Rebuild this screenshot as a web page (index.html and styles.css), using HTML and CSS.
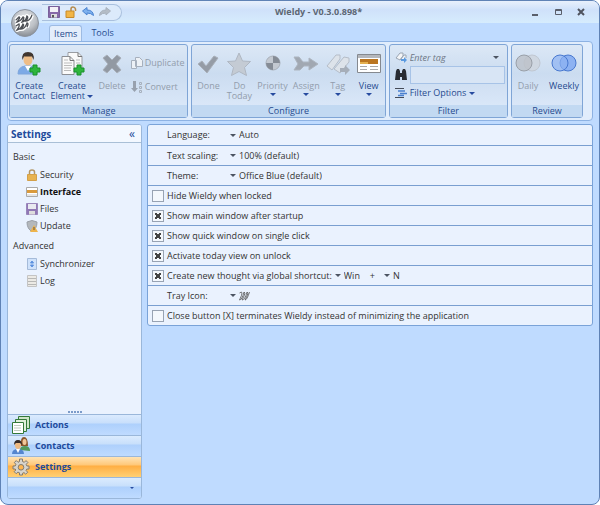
FILE: index.html
```
<!DOCTYPE html>
<html lang="en">
<head>
    <meta charset="UTF-8">
    <meta name="viewport" content="width=device-width, initial-scale=1.0">
    <title>Wieldy</title>
    <link rel="stylesheet" href="styles.css">
</head>
<body>
    <div class="window">
        <header class="titlebar">
            <button class="orb" aria-label="Application menu">
                <svg width="28" height="28" viewBox="0 0 28 28">
                    <defs>
                        <radialGradient id="orb" cx="50%" cy="30%" r="70%">
                            <stop offset="0" stop-color="#e4e6e9"/>
                            <stop offset="0.6" stop-color="#bcc0c5"/>
                            <stop offset="1" stop-color="#878c93"/>
                        </radialGradient>
                    </defs>
                    <circle cx="14" cy="14" r="13.5" fill="url(#orb)" stroke="#8a929e"/>
                    <path d="M5 11l3-3q2 0-2 5 4-1 6-5 2 0-1 5 4-1 5-6 2 1-1 5 4 0 6-6M5 17l3-2q1 2-2 6 4-1 6-6 2 1-2 5 4 0 6-6 2 0 0 4" fill="none" stroke="#fff" stroke-width="4" stroke-linejoin="round"/>
                    <path d="M5 11l3-3q2 0-2 5 4-1 6-5 2 0-1 5 4-1 5-6 2 1-1 5 4 0 6-6M5 17l3-2q1 2-2 6 4-1 6-6 2 1-2 5 4 0 6-6 2 0 0 4" fill="none" stroke="#4d5055" stroke-width="1.3"/>
                </svg>
            </button>
            <div class="quick">
                <button aria-label="Save">
                    <svg width="12" height="12" viewBox="0 0 12 12"><path d="M.5.5h11v11H.5z" fill="#8768a8" stroke="#7a609b"/><path d="M2 1h8v5H2z" fill="#f3f1f8"/><path d="M3 8h6v3.500H3z" fill="#ddd"/><path d="M4 9h2v2.500H4z" fill="#555"/></svg>
                </button>
                <button aria-label="Lock">
                    <svg width="12" height="12" viewBox="0 0 12 12"><path d="M6 6V3q0-2 2-2t2.500 2v2" fill="none" stroke="#b58a4c" stroke-width="1.500"/><path d="M1 5h8v6.500H1z" fill="#f2b545" stroke="#c68a2b"/></svg>
                </button>
                <button aria-label="Undo">
                    <svg width="12" height="12" viewBox="0 0 12 12"><path d="M.5 5L5 1.500V4q6 0 6.500 5.500Q9 7 5 7v2z" fill="#7db0ee" stroke="#4b83d0"/></svg>
                </button>
                <button aria-label="Redo" disabled>
                    <svg width="12" height="12" viewBox="0 0 12 12"><path d="M11.500 5L7 1.500V4Q1 4 .5 9.500 3 7 7 7v2z" fill="#b4bcc6" stroke="#a8b1bd"/></svg>
                </button>
            </div>
            <h1 class="title">Wieldy - V0.3.0.898*</h1>
            <div class="controls">
                <button aria-label="Minimize"><svg width="8" height="8" viewBox="0 0 8 8"><path d="M1 6h6v2H1z" fill="#5a5f6b"/></svg></button>
                <button aria-label="Maximize"><svg width="8" height="8" viewBox="0 0 8 8"><path d="M1.500 1.500h6v5h-6zM1.500 2.500h6" fill="none" stroke="#5a5f6b"/></svg></button>
                <button aria-label="Close"><svg width="8" height="8" viewBox="0 0 8 8"><path d="M1 1l6 6M7 1L1 7" stroke="#4f535e" stroke-width="2"/></svg></button>
            </div>
        </header>

        <nav class="tabs">
            <button class="tab active">Items</button>
            <button class="tab">Tools</button>
        </nav>

        <div class="ribbon">
            <section class="group manage">
                <div class="tools">
                    <button class="tool">
                        <svg width="26" height="26" viewBox="0 0 26 26"><path d="M2 23q0-7 7-8h5q6 1 7 8z" fill="#7daae6" stroke="#7fa6dc"/><path d="M9 15l3 5 3-5z" fill="#fff"/><ellipse cx="12" cy="8.500" rx="4.500" ry="6" fill="#eebd87"/><path d="M6.500 9Q5 1 12 1t5.500 8L16 5.500H8z" fill="#40362f"/><path d="M17 14h4v3h3v4h-3v3h-4v-3h-3v-4h3z" fill="#2eb53c" stroke="#18902a"/></svg>
                        <span>Create<br>Contact</span>
                    </button>
                    <button class="tool">
                        <svg width="26" height="26" viewBox="0 0 26 26"><path d="M9 1.500h10l4 4v13H9z" fill="#fafafa" stroke="#9a9da2"/><path d="M3 5.500h8l4 4v14H3z" fill="#fafafa" stroke="#8c8f94"/><path d="M5 9h4M5 12h8M5 14.500h8M5 17h7M5 19.500h7M17 9h4M17 12h4" stroke="#bbb"/><path d="M11 5.500v4h4M19 1.500v4h4" fill="none" stroke="#777"/><path d="M18 14h4v3h3v4h-3v3h-4v-3h-3v-4h3z" fill="#2eb53c" stroke="#18902a"/></svg>
                        <span>Create<br>Element <i class="arrow"></i></span>
                    </button>
                    <button class="tool" disabled>
                        <svg width="26" height="26" viewBox="0 0 26 26"><path d="M4 7l4-3 5 5 5-5 4 3-5 6 5 6-4 3-5-5-5 5-4-3 5-6z" fill="#9299a3" stroke="#a9b0ba"/></svg>
                        <span>Delete</span>
                    </button>
                    <div class="stack">
                        <button class="small" disabled>
                            <svg width="12" height="12" viewBox="0 0 12 12"><path d="M4.500.5h4l3 3v6h-7zM.5 3.500h5v8h-5z" fill="#edf1f6" stroke="#a7b0bd"/></svg>Duplicate
                        </button>
                        <button class="small" disabled>
                            <svg width="12" height="12" viewBox="0 0 12 12"><path d="M2 0h3v7h2l-3.500 4L0 7h2z" fill="#98a1ae"/><path d="M8.500 1.500h2v2h-2zM8.500 5.500h2v2h-2zM8.500 9.500h2v2h-2z" fill="none" stroke="#a7b0bd"/></svg>Convert
                        </button>
                    </div>
                </div>
                <h2 class="caption">Manage</h2>
            </section>
            <section class="group configure">
                <div class="tools">
                    <button class="tool" disabled>
                        <svg width="26" height="26" viewBox="0 0 26 26"><path d="M3 13l4-3 4 5 8-10 4 2-11 15z" fill="#959ca6" stroke="#a9b0ba"/></svg>
                        <span>Done</span>
                    </button>
                    <button class="tool" disabled>
                        <svg width="26" height="26" viewBox="0 0 26 26"><path d="M13 2l3.500 8 8 .5-6 6 2 8-7.500-4-7.500 4 2-8-6-6 8-.5z" fill="#c4cbd4" stroke="#afb7c2"/></svg>
                        <span>Do<br>Today</span>
                    </button>
                    <button class="tool" disabled>
                        <svg width="26" height="26" viewBox="0 0 26 26"><circle cx="13" cy="12" r="7" fill="#c3c9d1" stroke="#a9b0ba"/><path d="M13 12V5a7 7 0 0 1 7 7zM13 12v7a7 7 0 0 1-7-7z" fill="#858c96"/></svg>
                        <span>Priority<i class="arrow"></i></span>
                    </button>
                    <button class="tool" disabled>
                        <svg width="26" height="26" viewBox="0 0 26 26"><path d="M1 6h5l4 5h6V7l9 6-9 6v-4h-5l-4 4H1l4-6z" fill="#a1a8b2" stroke="#adb5c0"/></svg>
                        <span>Assign<i class="arrow"></i></span>
                    </button>
                    <button class="tool" disabled>
                        <svg width="26" height="26" viewBox="0 0 26 26"><path d="M2 15L11 4h4v4L7 19zM9 18L19 6l5 1v4l-9 11z" fill="#dde3ea" stroke="#b5bdc8"/><path d="M15 17h5v-3l5 5-5 5v-3h-5z" fill="#a6aeb9"/></svg>
                        <span>Tag<i class="arrow"></i></span>
                    </button>
                    <button class="tool">
                        <svg width="26" height="26" viewBox="0 0 26 26"><path d="M1.500 3.500h23v18h-23z" fill="#fff" stroke="#85898f"/><path d="M2 4h22v3H2z" fill="#b4b7bc"/><path d="M4 8h18v5H4z" fill="#bb7621"/><path d="M4 11h8v2H4z" fill="#e5b04e"/><path d="M4 15.500h7M4 18.500h7M14 15.500h8M14 18.500h8" stroke="#aaa"/></svg>
                        <span>View<i class="arrow"></i></span>
                    </button>
                </div>
                <h2 class="caption">Configure</h2>
            </section>
            <section class="group filter">
                <div class="fields">
                    <div class="field">
                        <svg width="12" height="12" viewBox="0 0 12 12"><path d="M1 7l4-5 3 0v3L5 9zM5 9l4-5h2v3" fill="#f3f5f8" stroke="#9aa5b3"/><path d="M6 8h3V6l3 3-3 3v-2H6z" fill="#5a9ae0"/></svg>
                        <input class="tag" type="text" placeholder="Enter tag" aria-label="Enter tag">
                        <i class="arrow dark"></i>
                    </div>
                    <div class="field">
                        <svg width="12" height="12" viewBox="0 0 12 12"><path d="M1 2l1-2h2l1 2v2h2V2l1-2h2l1 2 1 9H7V8H5v3H0z" fill="#292c32"/></svg>
                        <input class="search" type="text" aria-label="Search">
                    </div>
                    <button class="field options">
                        <svg width="12" height="12" viewBox="0 0 12 12"><path d="M0 1.500h9M0 10.500h9" stroke="#444b57"/><path d="M3 4h7M5 6.500h7M3 8.500h6" stroke="#4a80cf" stroke-width="1.500"/></svg>Filter Options <i class="arrow"></i>
                    </button>
                </div>
                <h2 class="caption">Filter</h2>
            </section>
            <section class="group review">
                <div class="tools">
                    <button class="tool" disabled>
                        <svg width="26" height="26" viewBox="0 0 26 26"><circle cx="17" cy="12" r="8" fill="#cfd7e1" stroke="#c0c7d1"/><circle cx="9" cy="12" r="8" fill="#bcc1c8" fill-opacity=".8" stroke="#999fa8"/></svg>
                        <span>Daily</span>
                    </button>
                    <button class="tool">
                        <svg width="26" height="26" viewBox="0 0 26 26"><circle cx="17" cy="12" r="8" fill="#8db2f2" stroke="#4878cf"/><circle cx="9" cy="12" r="8" fill="#8db2f2" fill-opacity=".7" stroke="#4878cf"/></svg>
                        <span>Weekly</span>
                    </button>
                </div>
                <h2 class="caption">Review</h2>
            </section>
        </div>

        <div class="content">
            <aside class="sidebar">
                <header class="side-head"><h2>Settings</h2><button aria-label="Collapse">«</button></header>
                <nav class="tree">
                    <h3>Basic</h3>
                    <a href="#"><svg width="12" height="12" viewBox="0 0 12 12"><path d="M3.500 6V3q0-2 2.500-2t2.500 2v3" fill="none" stroke="#b39666" stroke-width="1.500"/><path d="M1.500 5.500h9v6h-9z" fill="#e8b350" stroke="#d3a04a"/></svg>Security</a>
                    <a href="#" class="current"><svg width="12" height="12" viewBox="0 0 12 12"><path d="M.5 1.500h11v9H.5z" fill="#fff" stroke="#aaa"/><path d="M1 4h10v3H1z" fill="#d99a3d"/><path d="M1 9h10" stroke="#ccc"/></svg>Interface</a>
                    <a href="#"><svg width="12" height="12" viewBox="0 0 12 12"><path d="M.5.5h11v11H.5z" fill="#9078b5" stroke="#9a86bb"/><path d="M2 1h8v5H2z" fill="#e8e9f0"/><path d="M3 8h6v3.500H3z" fill="#ddd"/></svg>Files</a>
                    <a href="#"><svg width="12" height="12" viewBox="0 0 12 12"><path d="M1 2l5-1.500L11 2q0 7-5 9.500Q1 9 1 2z" fill="#b4b8bc" stroke="#9a9fa6"/><path d="M8 5l4 7H4z" fill="#edb44c"/><path d="M8 7v3" stroke="#654"/></svg>Update</a>
                    <h3>Advanced</h3>
                    <a href="#"><svg width="12" height="12" viewBox="0 0 12 12"><path d="M1.500.5h9v11h-9z" fill="#cfe2fb" stroke="#a5bbd9"/><path d="M4.500 5h3L6 3zM4.500 7h3L6 9z" fill="#5a90df" stroke="#5a90df"/></svg>Synchronizer</a>
                    <a href="#"><svg width="12" height="12" viewBox="0 0 12 12"><path d="M1.500.5h9v11h-9z" fill="#eceae5" stroke="#c4c4c4"/><path d="M2 3.500h8M2 6.500h8M2 9.500h8" stroke="#b8b8b6"/></svg>Log</a>
                </nav>
                <div class="grip"><i></i><i></i><i></i><i></i><i></i></div>
                <nav class="sections">
                    <button><svg width="18" height="18" viewBox="0 0 18 18"><path d="M6.500.5h11v12h-11z" fill="#cfe5c8" stroke="#34793a"/><path d="M3.500 3.500h11v12h-11z" fill="#e0efdb" stroke="#34793a"/><path d="M.5 6.500h11v11H.5z" fill="#fff" stroke="#34793a"/><path d="M2 9.500h7M2 12h7M2 14.500h7" stroke="#c0ccc0"/></svg>Actions</button>
                    <button><svg width="18" height="18" viewBox="0 0 18 18"><path d="M8 13q0-4 5-4t5 5z" fill="#529a5c"/><path d="M9 9q-1-9 3-9t4 9z" fill="#8b572c"/><ellipse cx="12.500" cy="5" rx="2" ry="3" fill="#f1c799"/><path d="M0 17q0-5 6-5t6 5z" fill="#5486cf"/><path d="M4 12l2 4 2-4z" fill="#fff"/><ellipse cx="6" cy="8" rx="3" ry="4" fill="#edba83"/><path d="M2 8q0-5 4-5t4 5L8 6H4z" fill="#342b28"/></svg>Contacts</button>
                    <button class="selected"><svg width="18" height="18" viewBox="0 0 18 18"><path d="M7.500 1h3v2.500l1.800.8L14 2.600 15.900 4.500l-1.700 1.800.7 1.700H17v3h-2.200l-.7 1.500 1.600 1.700-2 2-1.700-1.600-1.500.7V17h-3v-2.200l-1.600-.7-1.700 1.600-2-2 1.600-1.700L3.200 11H1V8h2.200l.7-1.700-1.600-1.800 2-1.900 1.700 1.700 1.500-.8z" fill="#d8d4cc" stroke="#827b70"/><circle cx="9" cy="9.300" r="2.800" fill="#ffb54e" stroke="#827b70"/></svg>Settings</button>
                    <button class="more" aria-label="More"><i class="arrow"></i></button>
                </nav>
            </aside>

            <main class="options-list">
                <div class="row"><label for="lang">Language:</label><i class="arrow dark"></i><select id="lang"><option>Auto</option></select></div>
                <div class="row"><label for="scale">Text scaling:</label><i class="arrow dark"></i><select id="scale"><option>100% (default)</option></select></div>
                <div class="row"><label for="theme">Theme:</label><i class="arrow dark"></i><select id="theme"><option>Office Blue (default)</option></select></div>
                <div class="row"><label class="check"><input type="checkbox">Hide Wieldy when locked</label></div>
                <div class="row"><label class="check"><input type="checkbox" checked>Show main window after startup</label></div>
                <div class="row"><label class="check"><input type="checkbox" checked>Show quick window on single click</label></div>
                <div class="row"><label class="check"><input type="checkbox" checked>Activate today view on unlock</label></div>
                <div class="row">
                    <label class="check"><input type="checkbox" checked>Create new thought via global shortcut:</label>
                    <i class="arrow dark"></i><select aria-label="Modifier"><option>Win</option></select>
                    <span class="plus">+</span>
                    <i class="arrow dark"></i><select aria-label="Key"><option>N</option></select>
                </div>
                <div class="row">
                    <label id="tray">Tray Icon:</label><i class="arrow dark"></i>
                    <button aria-labelledby="tray"><svg width="11" height="10" viewBox="0 0 11 10"><path d="M.5 2Q3 0 3 2T.5 9Q3 9 5 1q2 0 0 4t-2 4q3 0 5-8 2 0 0 4T6 9q2 0 4.500-8" fill="none" stroke="#555" stroke-width=".8"/></svg></button>
                </div>
                <div class="row"><label class="check"><input type="checkbox">Close button [X] terminates Wieldy instead of minimizing the application</label></div>
            </main>
        </div>
    </div>
</body>
</html>
```
FILE: styles.css
```
* {
    box-sizing: border-box;
}

body {
    margin: 0;
    background: #fff;
    color: #333;
    font-family: "Open Sans", "Noto Sans", sans-serif;
    font-size: 9px;
    line-height: 12px;
}

button, input, select {
    margin: 0;
    padding: 0;
    border: 0;
    background: none;
    color: inherit;
    font: inherit;
}

h1, h2, h3 {
    margin: 0;
    font-size: 9px;
}

svg {
    display: block;
    flex: none;
}

.window {
    display: flex;
    flex-direction: column;
    min-height: 100vh;
    border: 1px solid #5f82b5;
    border-radius: 8px;
    background: #bfdbff;
    overflow: hidden;
}

/* title bar */
.titlebar {
    display: flex;
    align-items: center;
    height: 22px;
    padding: 0 14px 0 10px;
    background: linear-gradient(#e8f0fc, #cfe1fa 40%, #d6ecfd);
}

.orb {
    align-self: flex-start;
    margin-top: 8px;
    z-index: 1;
}

.quick {
    display: flex;
    align-items: center;
    gap: 5px;
    height: 17px;
    margin-left: 3px;
    padding: 0 10px 0 6px;
    border: 1px solid #a9c0de;
    border-left: 0;
    border-radius: 0 9px 9px 0;
    background: #dceafb;
}

.title {
    flex: 1;
    padding-right: 16px;
    text-align: center;
    color: #5c6673;
}

.controls {
    display: flex;
    gap: 15px;
}

/* tabs */
.tabs {
    display: flex;
    gap: 4px;
    padding: 2px 0 0 48px;
}

.tab {
    height: 16px;
    padding: 0 5px;
    color: #274b8f;
}

.tab.active {
    padding: 0 4px;
    border: 1px solid #9dbbe3;
    border-bottom: 0;
    border-radius: 3px 3px 0 0;
    background: #e4eefb;
}

/* ribbon */
.ribbon {
    display: flex;
    gap: 3px;
    margin: 0 6px;
    padding: 2px 9px 2px 1px;
    border: 1px solid #8db2e3;
    border-radius: 4px;
    background: #e1edfc;
}

.group {
    display: flex;
    flex-direction: column;
    min-width: 0;
    height: 74px;
    border: 1px solid #7fa5d6;
    border-radius: 3px;
    background: linear-gradient(#dce8f6, #cbdcf0 40%, #dfebfb);
}

.manage {
    flex: 180;
}

.configure {
    flex: 195;
}

.filter {
    flex: 119;
}

.review {
    flex: 71;
}

.caption {
    height: 12px;
    background: #c2d9f2;
    color: #274b8f;
    font-weight: 400;
    line-height: 11px;
    text-align: center;
}

.tools {
    display: flex;
    flex: 1;
    justify-content: space-between;
    padding: 6px 3px 0;
}

.tool {
    display: flex;
    flex-direction: column;
    align-items: center;
    gap: 4px;
    color: #274b8f;
    line-height: 10px;
}

button:disabled {
    color: #929dac;
}

.arrow {
    display: inline-block;
    flex: none;
    width: 6px;
    border: 3px solid transparent;
    border-top-color: #274b9f;
    border-bottom: 0;
}

.arrow.dark {
    border-top-color: #4c5462;
}

.tool .arrow {
    vertical-align: middle;
}

.configure .arrow {
    display: block;
    margin: 2px auto 0;
}

.stack {
    display: flex;
    flex-direction: column;
    gap: 12px;
    padding-top: 6px;
}

.small {
    display: flex;
    align-items: center;
    gap: 2px;
}

.fields {
    display: flex;
    flex: 1;
    flex-direction: column;
    padding: 3px 2px 0 5px;
}

.field {
    display: flex;
    align-items: center;
    gap: 3px;
    height: 18px;
}

.field input {
    flex: 1;
    min-width: 0;
    height: 18px;
}

.field .arrow {
    margin-right: 6px;
}

.tag::placeholder {
    color: #6d7785;
    font-style: italic;
}

.search {
    border: 1px solid #a7c3e7;
    background: #d8e5f5;
}

.options {
    color: #274b8f;
}

/* content */
.content {
    display: flex;
    flex: 1;
    align-items: flex-start;
    gap: 5px;
    padding: 3px 6px 5px;
}

.sidebar {
    display: flex;
    flex: none;
    align-self: stretch;
    flex-direction: column;
    width: 135px;
    border: 1px solid #9ab7da;
    border-radius: 3px;
    background: #eaf2fe;
    overflow: hidden;
}

.side-head {
    display: flex;
    align-items: center;
    justify-content: space-between;
    height: 18px;
    padding: 0 6px 0 3px;
    border-bottom: 1px solid #a9bfd6;
    background: #f3f8ff;
    color: #214a9b;
}

.side-head h2 {
    font-size: 10px;
}

.side-head button {
    font-size: 12px;
}

.tree {
    flex: 1;
    padding: 5px;
}

.tree h3 {
    margin: 3px 0;
    font-weight: 400;
}

.tree h3:not(:first-child) {
    margin-top: 6px;
}

.tree a {
    display: flex;
    align-items: center;
    gap: 2px;
    height: 17px;
    padding-left: 13px;
    color: #333;
    text-decoration: none;
}

.tree .current {
    color: #111;
    font-weight: 700;
}

.grip {
    display: flex;
    justify-content: center;
    gap: 1px;
    padding: 1px;
}

.grip i {
    width: 2px;
    height: 2px;
    background: #7c9cca;
}

.sections button {
    display: flex;
    align-items: center;
    gap: 5px;
    width: 100%;
    height: 21px;
    padding-left: 4px;
    border-top: 1px solid #9ab7da;
    background: linear-gradient(#dbebfe, #c8dffb 40%, #aed0fc 45%, #bfdbff);
    color: #214a9b;
    font-weight: 700;
}

.sections .selected {
    background: linear-gradient(#ffe4b6, #ffc878 40%, #ffae42 45%, #ffd074);
}

.sections .more {
    justify-content: flex-end;
    padding-right: 7px;
}

.more .arrow {
    width: 4px;
    border-width: 2px 2px 0;
}

/* settings rows */
.options-list {
    flex: 1;
    border: 1px solid #7aa3d8;
    border-radius: 3px;
    background: #eaf2fe;
}

.row {
    display: flex;
    align-items: center;
    gap: 3px;
    height: 20px;
    padding-left: 19px;
    border-top: 1px solid #7a9fd0;
}

.row:first-child {
    border-top: 0;
}

.row > label:not(.check) {
    width: 60px;
}

.check {
    display: flex;
    align-items: center;
    gap: 3px;
    margin-left: -15px;
}

select {
    appearance: none;
}

input[type="checkbox"] {
    width: 12px;
    height: 12px;
    border: 1px solid #98a3b3;
    background: #f4f8fd;
    appearance: none;
}

input[type="checkbox"]:checked {
    padding: 2px;
    background:
        linear-gradient(45deg, transparent 40%, #444 40% 60%, transparent 60%) content-box,
        linear-gradient(-45deg, transparent 40%, #444 40% 60%, transparent 60%) content-box,
        #f4f8fd;
}

.plus {
    margin: 0 6px;
}
```
